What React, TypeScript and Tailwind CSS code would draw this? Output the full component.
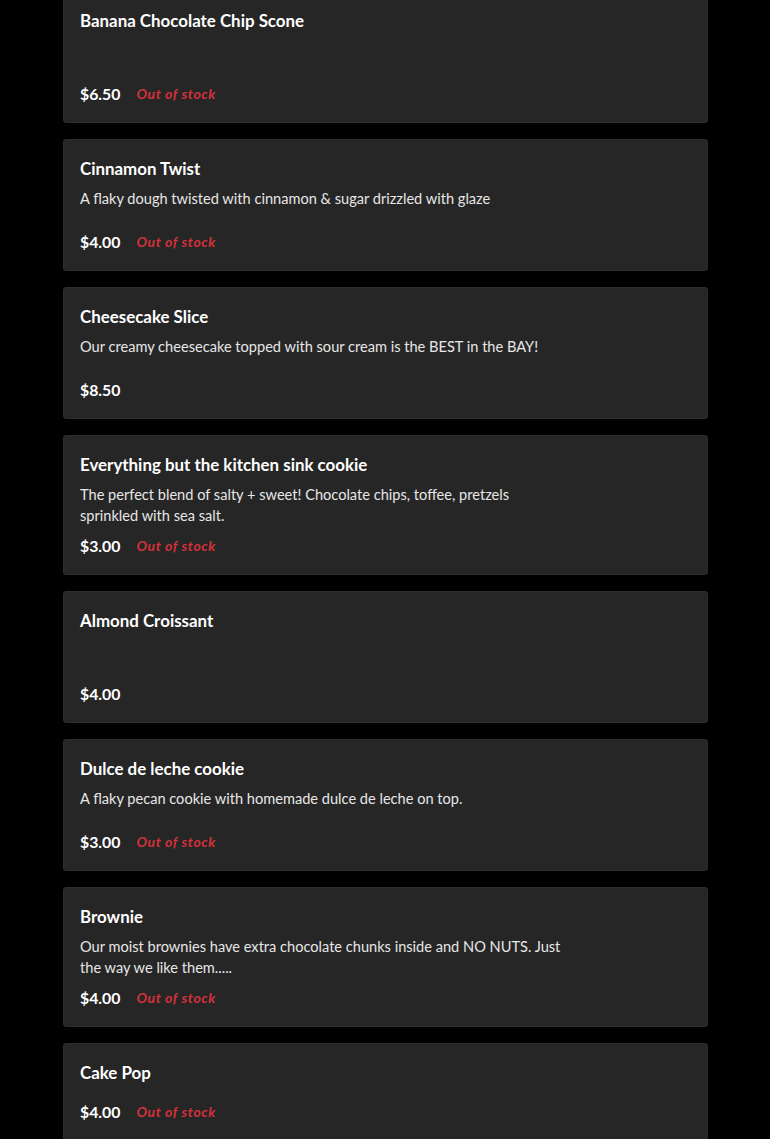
import React from "react";

type Item = { name: string; desc?: string; emptyDesc?: boolean; price: string; out: boolean };

const items: Item[] = [
  { name: "Banana Chocolate Chip Scone", emptyDesc: true, price: "$6.50", out: true },
  { name: "Cinnamon Twist", desc: "A flaky dough twisted with cinnamon & sugar drizzled with glaze", price: "$4.00", out: true },
  { name: "Cheesecake Slice", desc: "Our creamy cheesecake topped with sour cream is the BEST in the BAY!", price: "$8.50", out: false },
  { name: "Everything but the kitchen sink cookie", desc: "The perfect blend of salty + sweet! Chocolate chips, toffee, pretzels sprinkled with sea salt.", price: "$3.00", out: true },
  { name: "Almond Croissant", emptyDesc: true, price: "$4.00", out: false },
  { name: "Dulce de leche cookie", desc: "A flaky pecan cookie with homemade dulce de leche on top.", price: "$3.00", out: true },
  { name: "Brownie", desc: "Our moist brownies have extra chocolate chunks inside and NO NUTS. Just the way we like them.....", price: "$4.00", out: true },
  { name: "Cake Pop", price: "$4.00", out: true },
];

function Card({ item }: { item: Item }) {
  const hasMin = item.desc !== undefined || item.emptyDesc;
  return (
    <div
      className={
        "flex flex-col rounded-[3px] border border-[#2d2d2d] bg-[#262626] pl-[16px] pr-[16px] pt-[18px] pb-[18px] " +
        (hasMin ? "min-h-[132px]" : "")
      }
    >
      <div className="text-[16.9px] leading-[21px] font-bold text-white">{item.name}</div>
      {item.desc && (
        <div className="mt-[9px] max-w-[488px] text-[14.6px] leading-[21px] text-[#e6e6e6]">{item.desc}</div>
      )}
      <div className={"flex items-center gap-[16px] " + (hasMin ? "mt-auto pt-[10px]" : "mt-[19px]")}>
        <span className="text-[15.8px] leading-[20px] font-bold text-white">{item.price}</span>
        {item.out && (
          <span className="text-[14px] leading-[20px] font-bold italic tracking-[0.6px] text-[#d2323a]">Out of stock</span>
        )}
      </div>
    </div>
  );
}

export default function App() {
  return (
    <div
      className="min-h-[1139px] w-full overflow-hidden bg-black"
      style={{ fontFamily: "Lato, 'Noto Sans', sans-serif" }}
    >
      <div className="mx-[63px] mt-[-9px] flex w-[645px] flex-col gap-[16px]">
        {items.map((it) => (
          <Card key={it.name} item={it} />
        ))}
      </div>
    </div>
  );
}
